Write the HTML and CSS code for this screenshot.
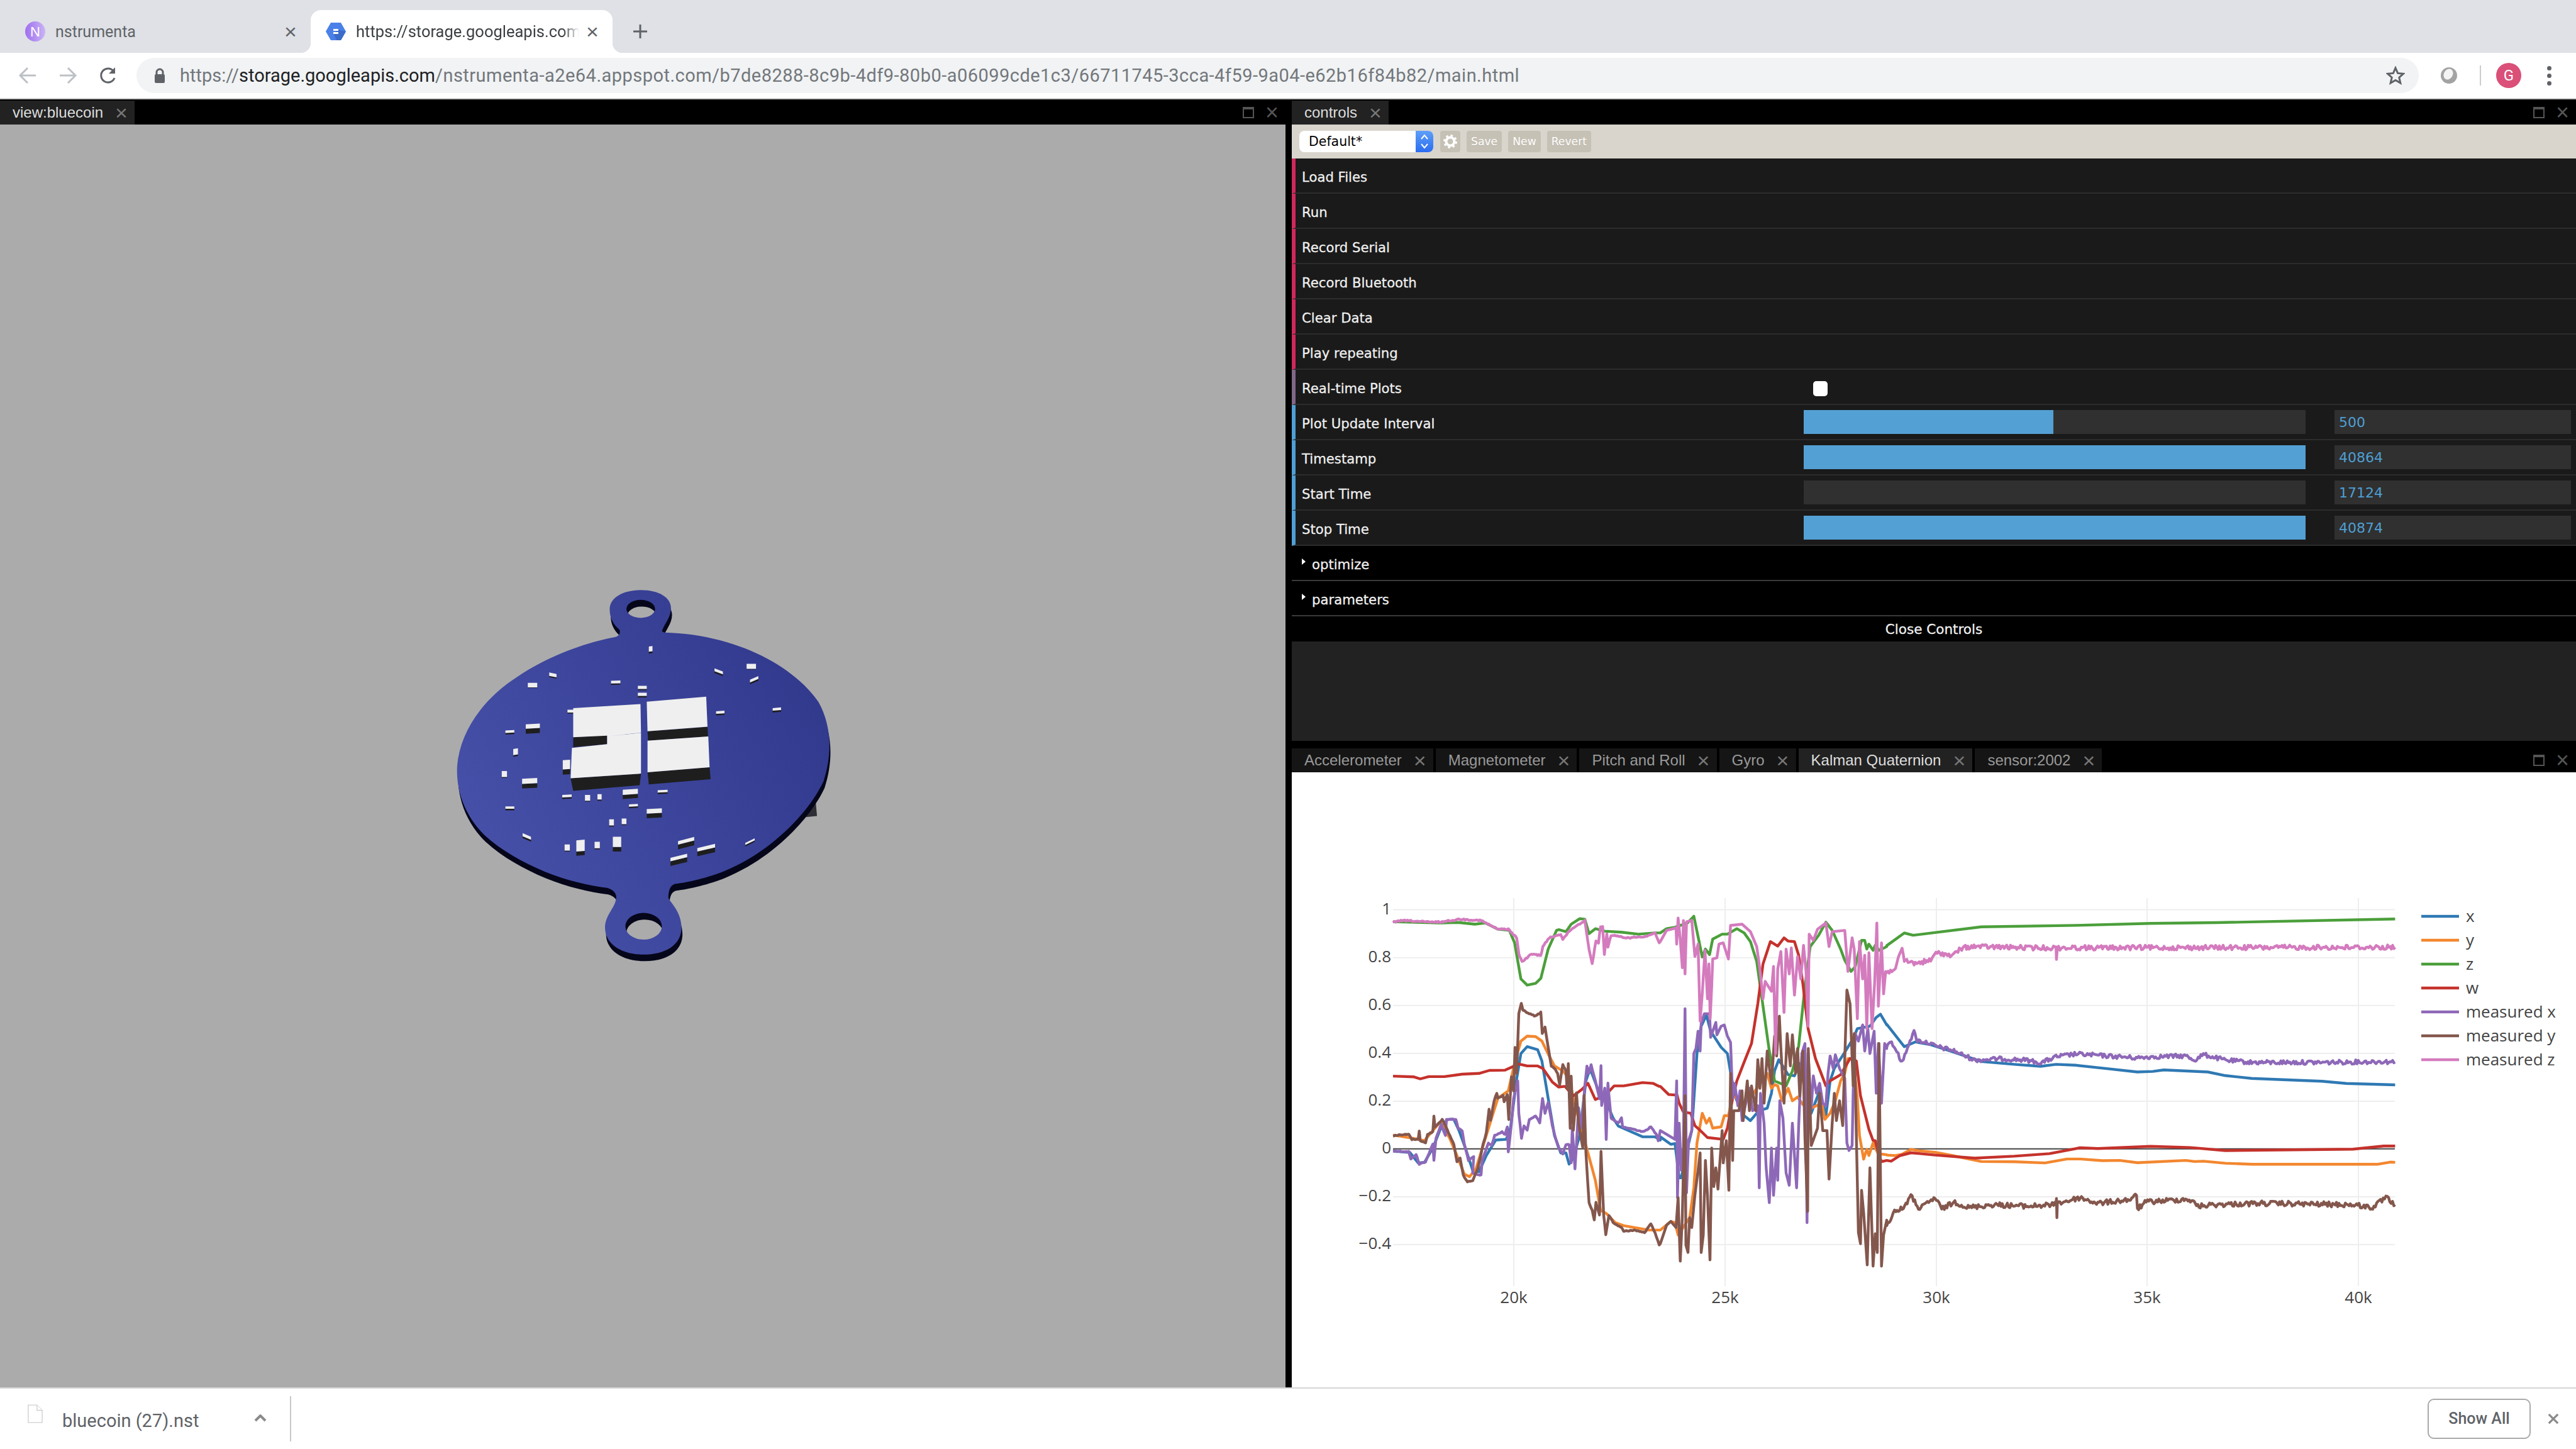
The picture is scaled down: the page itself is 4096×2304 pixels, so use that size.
FILE: index.html
```html
<!DOCTYPE html>
<html>

<head>
    <meta charset="UTF-8" />
    <title>nstrumenta</title>
    <link rel="stylesheet" href="styles.css">
</head>

<body>
    <div class="tabstrip">
        <div class="tab">
            <svg class="favicon" viewBox="0 0 32 32">
                <defs>
                    <linearGradient id="nst-grad" x1="0" y1="0" x2="1" y2="0">
                        <stop offset="0" stop-color="#a06ef0" />
                        <stop offset="1" stop-color="#c9b4f4" />
                    </linearGradient>
                </defs>
                <circle cx="16" cy="16" r="16" fill="url(#nst-grad)" />
                <text x="16" y="24" class="favicon-letter">N</text>
            </svg>
            <span class="tab-title">nstrumenta</span>
            <span class="tab-close">&times;</span>
        </div>
        <div class="tab tab-active">
            <svg class="favicon" viewBox="0 0 32 32">
                <path d="M8 2h16l8 14-8 14H8L0 16z" fill="#4a80e8" />
                <path d="M19 13l13 3-8 14h-7l-4-9z" fill="#3b6cc8" />
                <path d="M12 12h8v3h-8zM12 17h8v3h-8z" fill="#fff" />
            </svg>
            <span class="tab-title tab-title-fade">https://storage.googleapis.com</span>
            <span class="tab-close">&times;</span>
        </div>
        <svg class="new-tab" viewBox="0 0 24 24"><path d="M12 1v22M1 12h22" /></svg>
    </div>

    <div class="toolbar">
        <svg class="nav-icon nav-off" viewBox="0 0 32 32"><path d="M29 16H5M16 4L4 16l12 12" /></svg>
        <svg class="nav-icon nav-off" viewBox="0 0 32 32"><path d="M3 16h24M16 4l12 12-12 12" /></svg>
        <svg class="nav-icon" viewBox="0 0 32 32"><path d="M26 20a11 11 0 1 1-1-10" /><path class="nav-fill" d="M27 3v10H17z" /></svg>
        <div class="omnibox">
            <svg class="lock" viewBox="0 0 18 24"><path d="M4 10V7a5 5 0 0 1 10 0v3" class="lock-bow" /><rect x="1" y="10" width="16" height="14" rx="2" /></svg>
            <span class="url"><span class="url-dim">https://</span>storage.googleapis.com<span class="url-dim url-path">/nstrumenta-a2e64.appspot.com/b7de8288-8c9b-4df9-80b0-a06099cde1c3/66711745-3cca-4f59-9a04-e62b16f84b82/main.html</span></span>
            <svg class="star" viewBox="0 0 30 30"><path d="M15 3l3.6 8.4 9 .8-6.8 6 2 8.8L15 22.400 7.200 27l2-8.800-6.800-6 9-.8z" /></svg>
        </div>
        <div class="toolbar-end">
            <svg class="ext-icon" viewBox="0 0 28 28">
                <circle cx="14" cy="14" r="13" fill="#a3a3a3" />
                <ellipse cx="13" cy="12" rx="7" ry="9" fill="#f4f4f4" transform="rotate(30 13 12)" />
            </svg>
            <span class="toolbar-divider"></span>
            <span class="avatar">G</span>
            <span class="menu-dots"><i></i><i></i><i></i></span>
        </div>
    </div>

    <div class="workspace">
        <div class="panel panel-view">
            <div class="panel-head">
                <div class="ptab ptab-on">view:bluecoin<span class="ptab-x">&times;</span></div>
                <span class="panel-icons"><i class="icon-max"></i><span class="icon-x">&times;</span></span>
            </div>
            <div class="view-body">
                <svg id="board" class="fill-svg" viewBox="0 198 2044 2008"></svg>
            </div>
        </div>

        <div class="right-col">
            <div class="panel panel-controls">
                <div class="panel-head">
                    <div class="ptab ptab-on">controls<span class="ptab-x">&times;</span></div>
                    <span class="panel-icons"><i class="icon-max"></i><span class="icon-x">&times;</span></span>
                </div>
                <div class="preset-bar">
                    <div class="preset-select">
                        <span>Default*</span>
                        <span class="preset-arrows">
                            <svg viewBox="0 0 16 26"><path d="M3 9l5-6 5 6M3 17l5 6 5-6" /></svg>
                        </span>
                    </div>
                    <div class="preset-btn preset-gear">
                        <svg viewBox="0 0 24 24">
                            <circle cx="12" cy="12" r="6.500" class="gear-ring" />
                            <circle cx="12" cy="12" r="9.500" class="gear-teeth" />
                        </svg>
                    </div>
                    <div class="preset-btn">Save</div>
                    <div class="preset-btn">New</div>
                    <div class="preset-btn">Revert</div>
                </div>
                <div class="row row-fn">Load Files</div>
                <div class="row row-fn">Run</div>
                <div class="row row-fn">Record Serial</div>
                <div class="row row-fn">Record Bluetooth</div>
                <div class="row row-fn">Clear Data</div>
                <div class="row row-fn">Play repeating</div>
                <div class="row row-bool"><span class="row-label">Real-time Plots</span><span class="checkbox"></span></div>
                <div class="row row-num">
                    <span class="row-label">Plot Update Interval</span>
                    <span class="slider"><span class="slider-fill" style="width: 49.800%"></span></span>
                    <span class="num-box">500</span>
                </div>
                <div class="row row-num">
                    <span class="row-label">Timestamp</span>
                    <span class="slider"><span class="slider-fill" style="width: 100%"></span></span>
                    <span class="num-box">40864</span>
                </div>
                <div class="row row-num">
                    <span class="row-label">Start Time</span>
                    <span class="slider"><span class="slider-fill" style="width: 0%"></span></span>
                    <span class="num-box">17124</span>
                </div>
                <div class="row row-num">
                    <span class="row-label">Stop Time</span>
                    <span class="slider"><span class="slider-fill" style="width: 100%"></span></span>
                    <span class="num-box">40874</span>
                </div>
                <div class="folder"><i class="caret"></i>optimize</div>
                <div class="folder"><i class="caret"></i>parameters</div>
                <div class="close-controls">Close Controls</div>
                <div class="controls-rest"></div>
            </div>

            <div class="panel panel-plots">
                <div class="panel-head">
                    <div class="ptab">Accelerometer<span class="ptab-x">&times;</span></div>
                    <div class="ptab">Magnetometer<span class="ptab-x">&times;</span></div>
                    <div class="ptab">Pitch and Roll<span class="ptab-x">&times;</span></div>
                    <div class="ptab">Gyro<span class="ptab-x">&times;</span></div>
                    <div class="ptab ptab-on">Kalman Quaternion<span class="ptab-x">&times;</span></div>
                    <div class="ptab">sensor:2002<span class="ptab-x">&times;</span></div>
                    <span class="panel-icons"><i class="icon-max"></i><span class="icon-x">&times;</span></span>
                </div>
                <div class="plot-body">
                    <svg id="plot" class="fill-svg" viewBox="2054 1228 2042 978"></svg>
                </div>
            </div>
        </div>
    </div>

    <div class="downloads">
        <svg class="file-icon" viewBox="0 0 26 32"><path d="M1 1h15l9 9v21H1z" /><path d="M16 1v9h9" /></svg>
        <span class="file-name">bluecoin (27).nst</span>
        <svg class="file-chevron" viewBox="0 0 20 12"><path d="M2 10l8-8 8 8" /></svg>
        <span class="file-divider"></span>
        <span class="show-all">Show All</span>
        <svg class="bar-close" viewBox="0 0 20 20"><path d="M2 2l16 16M18 2L2 18" /></svg>
    </div>

    <script src="plots.js"></script>
</body>

</html>
```

FILE: styles.css
```css
* {
    box-sizing: border-box;
}

html,
body {
    margin: 0;
    width: 4096px;
    height: 2304px;
    overflow: hidden;
}

body {
    display: flex;
    flex-direction: column;
    font-family: "Liberation Sans", sans-serif;
    background-color: #000000;
}

/* browser tabs */
.tabstrip {
    display: flex;
    align-items: flex-end;
    height: 84px;
    background-color: #dfe1e6;
}

.tab {
    display: flex;
    align-items: center;
    width: 494px;
    height: 68px;
    padding-left: 40px;
    position: relative;
}

.tab-active {
    width: 480px;
    padding-left: 24px;
    background-color: #ffffff;
    border-radius: 16px 16px 0 0;
}

.tab-active::before,
.tab-active::after {
    content: "";
    position: absolute;
    bottom: 0;
    width: 16px;
    height: 16px;
}

.tab-active::before {
    left: -16px;
    background: radial-gradient(circle at 0 0, transparent 16px, #ffffff 16.500px);
}

.tab-active::after {
    right: -16px;
    background: radial-gradient(circle at 100% 0, transparent 16px, #ffffff 16.500px);
}

.favicon {
    width: 32px;
    height: 32px;
    flex: none;
}

.favicon-letter {
    font-family: "Liberation Sans", sans-serif;
    font-size: 22px;
    fill: #ffffff;
    text-anchor: middle;
}

.tab-title {
    flex: 1;
    margin-left: 16px;
    font-family: Roboto, sans-serif;
    font-size: 25px;
    color: #5f6368;
    white-space: nowrap;
    overflow: hidden;
}

.tab-title-fade {
    font-size: 25.500px;
    color: #3c4043;
    -webkit-mask-image: linear-gradient(to right, #000000 90%, transparent 97%);
}

.tab-close {
    width: 20px;
    margin-right: 22px;
    font-size: 34px;
    line-height: 34px;
    color: #5f6368;
    text-align: center;
}

.new-tab {
    width: 24px;
    height: 24px;
    margin: 0 0 22px 32px;
    fill: none;
    stroke: #5f6368;
    stroke-width: 3;
}

/* address bar */
.toolbar {
    display: flex;
    align-items: center;
    height: 74px;
    padding-left: 28px;
    background-color: #ffffff;
    border-bottom: 2px solid #c8c8c8;
}

.nav-icon {
    width: 32px;
    height: 32px;
    margin-right: 32px;
    fill: none;
    stroke: #5f6368;
    stroke-width: 3;
}

.nav-off {
    stroke: #bdc1c6;
}

.nav-fill {
    fill: #5f6368;
    stroke: none;
}

.omnibox {
    display: flex;
    align-items: center;
    flex: 1;
    height: 56px;
    margin-left: -3px;
    padding: 0 22px 0 28px;
    background-color: #f1f3f4;
    border-radius: 28px;
}

.lock {
    width: 18px;
    height: 24px;
    fill: #5f6368;
}

.lock-bow {
    fill: none;
    stroke: #5f6368;
    stroke-width: 3;
}

.url {
    flex: 1;
    margin-left: 23px;
    font-family: Roboto, sans-serif;
    font-size: 29px;
    color: #202124;
    white-space: nowrap;
}

.url-dim {
    color: #73777c;
}

.url-path {
    letter-spacing: 0.470px;
}

.star {
    width: 30px;
    height: 30px;
    fill: none;
    stroke: #5f6368;
    stroke-width: 3;
}

.toolbar-end {
    display: flex;
    align-items: center;
    width: 250px;
}

.ext-icon {
    width: 28px;
    height: 28px;
    margin-left: 34px;
}

.toolbar-divider {
    width: 2px;
    height: 32px;
    margin-left: 35px;
    background-color: #cccccc;
}

.avatar {
    width: 40px;
    height: 40px;
    margin-left: 24px;
    font-family: Roboto, sans-serif;
    font-size: 24px;
    line-height: 40px;
    text-align: center;
    color: #ffffff;
    background-color: #da5078;
    border-radius: 50%;
}

.menu-dots {
    display: flex;
    flex-direction: column;
    gap: 5px;
    margin-left: 41px;
}

.menu-dots i {
    width: 7px;
    height: 7px;
    background-color: #5f6368;
    border-radius: 50%;
}

/* layout panels */
.workspace {
    display: flex;
    gap: 10px;
    height: 2048px;
}

.panel {
    display: flex;
    flex-direction: column;
}

.panel-view {
    width: 2044px;
}

.right-col {
    display: flex;
    flex-direction: column;
    gap: 10px;
    flex: 1;
}

.panel-controls {
    height: 1020px;
}

.panel-plots {
    flex: 1;
}

.panel-head {
    display: flex;
    align-items: flex-end;
    gap: 4px;
    height: 40px;
    flex: none;
    background-color: #000000;
}

.ptab {
    display: flex;
    align-items: center;
    height: 38px;
    padding: 0 15px 0 20px;
    font-size: 24px;
    color: #999999;
    background-color: #151515;
    white-space: nowrap;
}

.ptab-on {
    color: #dddddd;
    background-color: #222222;
}

.ptab-x {
    width: 16px;
    margin-left: 19px;
    font-size: 34px;
    line-height: 34px;
    color: #777777;
    text-align: center;
}

.panel-icons {
    display: flex;
    align-items: center;
    margin-left: auto;
    height: 38px;
    padding-right: 14px;
}

.icon-max {
    width: 18px;
    height: 18px;
    border: 2px solid #555555;
    border-top-width: 4px;
}

.icon-x {
    width: 18px;
    margin-left: 18px;
    font-size: 36px;
    line-height: 36px;
    text-align: center;
    color: #555555;
}

.view-body {
    flex: 1;
    background-color: #ababab;
}

.fill-svg {
    display: block;
    width: 100%;
    height: 100%;
}

/* controls */
.preset-bar {
    display: flex;
    align-items: center;
    gap: 10px;
    height: 54px;
    flex: none;
    padding-left: 12px;
    background-color: #d9d5cc;
}

.preset-select {
    display: flex;
    align-items: center;
    justify-content: space-between;
    width: 213px;
    height: 34px;
    margin-right: 1px;
    padding-left: 15px;
    font-family: "DejaVu Sans", sans-serif;
    font-size: 20.500px;
    color: #000000;
    background-color: #ffffff;
    border-radius: 8px;
    overflow: hidden;
}

.preset-arrows {
    display: flex;
    align-items: center;
    justify-content: center;
    width: 28px;
    height: 34px;
    background: linear-gradient(#5f9ff8, #2a6cf0);
}

.preset-arrows svg {
    width: 16px;
    height: 26px;
    fill: none;
    stroke: #ffffff;
    stroke-width: 2;
}

.preset-btn {
    display: flex;
    align-items: center;
    height: 34px;
    padding: 0 7px;
    font-family: "DejaVu Sans", sans-serif;
    font-size: 17.200px;
    color: #ffffff;
    background-color: #c6c1b5;
    border-radius: 4px;
    text-shadow: 0 1px 0 #b2ac9f;
}

.preset-gear {
    width: 32px;
    padding: 0 4px;
}

.preset-gear svg {
    width: 24px;
    height: 24px;
    fill: none;
    stroke: #ffffff;
}

.gear-ring {
    stroke-width: 4;
}

.gear-teeth {
    stroke-width: 3;
    stroke-dasharray: 3.500 4;
}

.row {
    display: flex;
    align-items: center;
    height: 56px;
    flex: none;
    padding: 4px 0 0 10px;
    font-family: "DejaVu Sans", sans-serif;
    font-size: 21.200px;
    color: #f0f0f0;
    background-color: #1a1a1a;
    border-left: 6px solid #d1285c;
    border-bottom: 2px solid #2c2c2c;
    text-shadow: 0 -1px 0 #111111;
    -webkit-text-stroke: 0.300px #f0f0f0;
}

.row-bool {
    border-left-color: #806787;
}

.row-num {
    border-left-color: #4f9fd3;
}

.row-label {
    width: 798px;
    flex: none;
}

.checkbox {
    width: 23px;
    height: 24px;
    margin: 1px 0 0 15px;
    background-color: #ffffff;
    border-radius: 5px;
}

.slider {
    width: 798px;
    height: 38px;
    flex: none;
    margin-top: -4px;
    background-color: #303030;
}

.slider-fill {
    display: block;
    height: 100%;
    background-color: #53a0d4;
}

.num-box {
    width: 376px;
    height: 38px;
    margin: -4px 0 0 46px;
    padding-left: 7px;
    font-size: 22px;
    line-height: 40px;
    color: #4f9fd3;
    background-color: #303030;
    text-shadow: none;
    -webkit-text-stroke: 0;
}

.folder {
    display: flex;
    align-items: center;
    height: 56px;
    flex: none;
    padding: 4px 0 0 16px;
    font-family: "DejaVu Sans", sans-serif;
    font-size: 21.200px;
    color: #f0f0f0;
    background-color: #000000;
    border-bottom: 2px solid #3a3a3a;
    -webkit-text-stroke: 0.300px #f0f0f0;
}

.caret {
    width: 0;
    height: 0;
    margin: -8px 10px 0 0;
    border-left: 6px solid #ffffff;
    border-top: 5px solid transparent;
    border-bottom: 5px solid transparent;
}

.close-controls {
    height: 40px;
    flex: none;
    font-family: "DejaVu Sans", sans-serif;
    font-size: 21.500px;
    line-height: 42px;
    text-align: center;
    color: #f0f0f0;
    background-color: #000000;
    -webkit-text-stroke: 0.300px #f0f0f0;
}

.controls-rest {
    flex: 1;
    background-color: #222222;
}

.plot-body {
    flex: 1;
    background-color: #ffffff;
}

/* plot */
.grid-line {
    stroke: #eeeeee;
    stroke-width: 2;
}

.zero-line {
    stroke: #444444;
    stroke-width: 2;
}

.plot-text {
    font-family: "Open Sans", sans-serif;
    font-size: 26px;
    fill: #444444;
}

.tick-y {
    text-anchor: end;
}

.tick-x {
    text-anchor: middle;
}

.trace {
    fill: none;
    stroke-width: 4.400;
    stroke-linejoin: round;
}

/* bottom bar */
.downloads {
    display: flex;
    align-items: center;
    flex: 1;
    padding-left: 44px;
    background-color: #ffffff;
    border-top: 2px solid #d5d5d5;
}

.file-icon {
    width: 24px;
    height: 30px;
    margin-top: -16px;
    fill: #ffffff;
    stroke: #d0d0d0;
    stroke-width: 1.500;
}

.file-name {
    margin: 6px 0 0 31px;
    font-family: Roboto, sans-serif;
    font-size: 29px;
    color: #5f6368;
}

.file-chevron {
    width: 20px;
    height: 12px;
    margin: -2px 0 0 88px;
    fill: none;
    stroke: #8a8a8a;
    stroke-width: 4;
}

.file-divider {
    width: 2px;
    height: 72px;
    margin-left: 37px;
    background-color: #c8c8c8;
}

.show-all {
    width: 164px;
    height: 64px;
    margin-left: auto;
    font-family: Roboto, sans-serif;
    font-size: 25px;
    font-weight: 500;
    line-height: 60px;
    text-align: center;
    color: #5f6368;
    border: 2px solid #aaaaaa;
    border-radius: 10px;
}

.bar-close {
    width: 18px;
    height: 18px;
    margin: 0 27px 0 27px;
    fill: none;
    stroke: #8a8a8a;
    stroke-width: 3.500;
}
```

FILE: plots.js
```js
const SVG_NS = "http://www.w3.org/2000/svg";

function add(parent, tag, attrs, text) {
    const el = document.createElementNS(SVG_NS, tag);
    for (const key in attrs) {
        el.setAttribute(key, attrs[key]);
    }
    if (text) {
        el.textContent = text;
    }
    parent.appendChild(el);
    return el;
}

// small seeded generator so the noisy traces stay the same on each load
let seed = 12345;
function rand() {
    seed = (seed * 1103515245 + 12345) % 2147483648;
    return seed / 2147483648;
}

/* ---------- board view ---------- */

const BOARD_OUTLINE = "M850 205L860 210C1100 215 1340 320 1450 480C1500 570 1505 680 1470 790C1420 900 1280 1060 1090 1140" +
    "C1030 1165 950 1185 900 1190C880 1195 875 1220 875 1245C885 1265 925 1300 925 1360C925 1430 860 1465 780 1465" +
    "C690 1465 632 1420 632 1360C632 1310 675 1280 675 1240C675 1225 660 1210 640 1205C500 1190 300 1120 170 1000" +
    "C90 920 60 820 65 730C75 600 160 470 300 380C400 310 550 250 670 228C690 222 690 210 688 200" +
    "C660 175 650 150 650 120C650 75 700 45 770 45C840 45 885 75 885 115C885 150 860 175 850 205Z" +
    "M714 118a55 35 0 1 0 110 0a55 35 0 1 0-110 0Z" +
    "M710 1355a70 52 0 1 0 140 0a70 52 0 1 0-140 0Z";

// x, y, width, height, side height, tilt
const CHIPS = [
    [800, 265, 14, 20, 7, -2], [655, 398, 36, 11, 5, -1], [758, 418, 34, 12, 5, 0], [758, 445, 34, 12, 6, 0],
    [1052, 350, 32, 11, 7, 12], [1175, 332, 36, 20, 2, 0], [1188, 394, 32, 11, 7, -14], [1058, 517, 32, 10, 6, -2],
    [1275, 505, 32, 10, 7, -3], [418, 366, 28, 13, 5, 6], [336, 406, 36, 18, 2, 0], [488, 511, 24, 11, 4, 0],
    [328, 568, 54, 17, 20, -3], [250, 592, 34, 10, 6, -2], [280, 664, 18, 24, 6, -3], [470, 708, 28, 36, 20, -2],
    [236, 750, 20, 23, 4, 0], [314, 780, 58, 20, 18, -3], [468, 843, 36, 10, 6, -2], [555, 843, 20, 23, 3, 0],
    [603, 840, 16, 21, 5, 0], [700, 823, 58, 20, 16, -4], [834, 825, 38, 9, 6, -2], [724, 880, 34, 9, 6, -2],
    [792, 898, 58, 18, 18, -3], [250, 888, 34, 9, 6, 0], [648, 938, 18, 24, 4, 0], [696, 935, 18, 22, 4, 0],
    [316, 992, 32, 12, 7, 14], [477, 1036, 20, 24, 4, 0], [522, 1020, 32, 44, 16, -3], [592, 1026, 20, 25, 4, 0],
    [662, 1006, 32, 40, 18, 0], [912, 1023, 62, 14, 18, -16], [986, 1050, 68, 14, 18, -16], [883, 1088, 64, 14, 18, -16],
    [1170, 1030, 36, 8, 6, -18]
];

// four big modules, drawn as top and side polygons
const BIG_SIDES = "M510 618L640 610V645L510 657ZM500 778L770 760L765 805L510 827ZM795 595L1025 578L1027 615L797 632ZM795 755L1033 735L1037 782L800 802Z";
const BIG_TOPS = "M510 505L768 489L770 600L640 615L640 612L510 618ZM640 615L770 601L770 760L500 778L505 660L640 645ZM792 480L1020 460L1025 577L795 595ZM795 632L1028 615L1033 735L795 755Z";

function drawBoard() {
    const svg = document.querySelector("#board");
    const defs = add(svg, "defs", {});
    const grad = add(defs, "linearGradient", { id: "pcb", gradientUnits: "userSpaceOnUse", x1: 100, y1: 1100, x2: 1400, y2: 400 });
    add(grad, "stop", { offset: 0, "stop-color": "#4751a9" });
    add(grad, "stop", { offset: 1, "stop-color": "#323a8e" });

    const g = add(svg, "g", { transform: "translate(700 920) scale(.4146 .408)" });
    add(g, "path", { d: "M1440 870L1445 925L1395 930Z", fill: "#2e2e34" });
    add(g, "path", { d: BOARD_OUTLINE, fill: "#05061a", "fill-rule": "evenodd", transform: "translate(4 26)" });
    add(g, "path", { d: BOARD_OUTLINE, fill: "url(#pcb)", "fill-rule": "evenodd" });

    let sides = BIG_SIDES;
    let tops = BIG_TOPS;
    CHIPS.forEach(function (c) {
        const [x, y, w, h, s, t] = c;
        sides += `M${x} ${y + h}l${w} ${t}v${s}l${-w} ${-t}Z`;
        tops += `M${x} ${y}l${w} ${t}v${h}l${-w} ${-t}Z`;
    });
    add(g, "path", { d: sides, fill: "#1e1e1e" });
    add(g, "path", { d: tops, fill: "#efefef" });
}

/* ---------- plot ---------- */

const GRID_Y = [[1446.6, "1"], [1522.7, "0.8"], [1598.8, "0.6"], [1674.9, "0.4"], [1751, "0.2"], [1903, "\u22120.2"], [1979, "\u22120.4"]];
const GRID_X = [[2407, "20k"], [2743, "25k"], [3079, "30k"], [3414, "35k"], [3750, "40k"]];
const PLOT_LEFT = 2215;
const PLOT_RIGHT = 3808;

// points are [x, y, x, y, ...] in three overlapping pieces of the time axis
const TRACES = [
    {
        name: "x", color: "#2f79b3",
        a: [0, 1012, 80, 1018, 120, 1060, 150, 1058, 190, 1000, 230, 915, 260, 885, 290, 885, 315, 930, 345, 1000, 380, 1090, 410, 1095, 445, 1030, 490, 968, 540, 965, 560, 920, 590, 720, 610, 620, 640, 592, 690, 605, 710, 650, 740, 800, 770, 950, 800, 1020, 825, 1020, 840, 1065, 860, 1040, 890, 950, 920, 730, 940, 680, 980, 770, 1020, 820, 1050, 880, 1075, 912, 1190, 955, 1250, 955, 1275, 968],
        b: [0, 955, 50, 985, 70, 982, 90, 1120, 100, 1120, 130, 1000, 150, 930, 175, 620, 195, 510, 220, 465, 240, 530, 290, 595, 320, 620, 340, 720, 360, 800, 400, 870, 430, 890, 470, 850, 510, 840, 530, 780, 545, 690, 565, 645, 610, 705, 640, 710, 665, 660, 700, 790, 720, 860, 760, 770, 790, 870, 810, 730, 830, 680, 880, 615, 920, 560, 940, 520, 1000, 510, 1030, 475, 1050, 462, 1080, 505],
        c: [0, 512, 40, 592, 65, 575, 100, 585, 150, 610, 215, 645, 290, 655, 350, 662, 385, 655, 430, 658, 500, 670, 570, 682, 605, 680, 630, 675, 730, 682, 770, 695, 830, 705, 990, 715, 1045, 723, 1156, 728]
    },
    {
        name: "y", color: "#f3872f",
        a: [0, 948, 90, 960, 150, 970, 190, 930, 225, 895, 270, 960, 300, 1020, 340, 1105, 365, 1115, 395, 1085, 430, 990, 470, 880, 500, 800, 550, 770, 580, 660, 610, 570, 640, 550, 680, 552, 710, 570, 745, 630, 770, 670, 810, 690, 840, 720, 860, 800, 900, 930, 930, 1020, 965, 1130, 990, 1250, 1020, 1265, 1060, 1300, 1100, 1312, 1220, 1330, 1270, 1330],
        b: [0, 1330, 50, 1295, 70, 1300, 85, 1350, 140, 1280, 160, 1160, 175, 980, 200, 860, 220, 900, 235, 880, 250, 920, 290, 915, 305, 870, 325, 870, 345, 790, 400, 820, 430, 800, 460, 760, 510, 700, 530, 760, 545, 745, 560, 750, 580, 810, 610, 760, 630, 810, 655, 795, 680, 825, 720, 840, 770, 820, 785, 885, 810, 860, 835, 810, 860, 730, 880, 700, 895, 640, 920, 640, 940, 800, 950, 950, 970, 1045, 985, 1005, 995, 1030, 1015, 980, 1040, 1025, 1060, 1025, 1080, 1027],
        c: [0, 978, 20, 980, 35, 975, 55, 958, 75, 963, 110, 968, 150, 980, 215, 1001, 290, 1002, 360, 1006, 410, 992, 440, 992, 490, 998, 530, 997, 570, 1005, 680, 997, 700, 1001, 720, 1000, 770, 1007, 830, 1011, 1115, 1011, 1145, 1003, 1156, 1004]
    },
    {
        name: "z", color: "#4b9f3b",
        a: [0, 90, 230, 95, 310, 93, 390, 100, 440, 95, 500, 120, 555, 125, 580, 175, 610, 320, 640, 345, 680, 338, 705, 318, 740, 200, 780, 125, 790, 122, 825, 130, 850, 100, 890, 78, 915, 80, 935, 138, 965, 118, 1010, 128, 1090, 132, 1170, 140, 1250, 135, 1275, 135],
        b: [0, 135, 30, 118, 70, 112, 130, 95, 160, 68, 185, 170, 200, 232, 215, 200, 235, 222, 250, 160, 295, 140, 320, 140, 365, 118, 400, 135, 430, 170, 460, 250, 480, 370, 520, 610, 545, 730, 600, 750, 630, 690, 660, 590, 690, 350, 715, 190, 755, 145, 790, 92, 820, 125, 860, 200, 880, 245, 910, 290, 930, 270, 960, 165, 975, 165, 985, 200, 995, 180, 1015, 205, 1025, 185, 1045, 205, 1080, 190],
        c: [0, 232, 40, 187, 60, 195, 215, 165, 430, 160, 600, 153, 750, 150, 1156, 137]
    },
    {
        name: "w", color: "#c5322c",
        a: [0, 711, 100, 714, 130, 722, 170, 713, 245, 713, 330, 703, 410, 700, 460, 688, 535, 687, 600, 662, 640, 670, 690, 670, 715, 680, 760, 735, 790, 755, 820, 752, 860, 790, 900, 765, 930, 740, 965, 805, 1010, 790, 1055, 750, 1100, 750, 1190, 737, 1240, 740, 1270, 752],
        b: [0, 752, 40, 785, 80, 787, 90, 820, 110, 855, 145, 860, 165, 910, 185, 925, 225, 958, 300, 965, 320, 920, 345, 800, 365, 730, 395, 665, 435, 580, 465, 420, 490, 260, 525, 170, 560, 188, 590, 155, 610, 168, 640, 170, 660, 225, 680, 340, 705, 520, 740, 640, 790, 750, 810, 730, 860, 705, 905, 640, 935, 650, 955, 790, 995, 925, 1015, 970, 1025, 970, 1040, 1020, 1055, 1055, 1080, 1050],
        c: [0, 997, 10, 1000, 30, 980, 55, 970, 110, 978, 200, 989, 290, 982, 370, 973, 440, 952, 480, 955, 600, 947, 690, 951, 770, 962, 1060, 957, 1130, 946, 1156, 946]
    },
    {
        name: "measured x", color: "#8e68b8", jitterA: 1.5, jitterC: 15,
        a: [0, 1012, 75, 1015, 85, 1045, 110, 1025, 125, 1065, 155, 1055, 190, 985, 195, 1050, 205, 960, 230, 905, 250, 950, 255, 885, 300, 885, 310, 920, 330, 930, 340, 985, 360, 1050, 385, 1035, 380, 1100, 420, 1110, 425, 1050, 455, 980, 470, 990, 485, 950, 520, 935, 535, 945, 545, 915, 550, 1015, 565, 900, 575, 800, 595, 730, 600, 860, 613, 960, 625, 910, 640, 930, 650, 885, 680, 870, 700, 900, 713, 800, 725, 860, 740, 815, 760, 910, 775, 960, 790, 1000, 810, 1025, 825, 985, 840, 985, 850, 1060, 855, 920, 868, 1085, 885, 840, 900, 920, 915, 750, 925, 670, 935, 700, 945, 665, 965, 730, 985, 800, 992, 670, 995, 830, 1010, 760, 1017, 965, 1025, 740, 1040, 880, 1075, 900, 1090, 880, 1095, 915, 1150, 925, 1195, 935, 1230, 915, 1260, 950, 1265, 970, 1275, 930],
        b: [0, 930, 30, 945, 70, 965, 78, 730, 82, 1200, 90, 900, 100, 1090, 110, 1000, 118, 440, 125, 1180, 135, 970, 150, 930, 160, 620, 170, 600, 180, 530, 190, 610, 195, 500, 210, 460, 235, 460, 240, 555, 265, 495, 270, 545, 290, 510, 305, 505, 320, 550, 335, 575, 345, 800, 355, 740, 370, 830, 380, 770, 390, 890, 410, 810, 425, 760, 440, 850, 465, 830, 472, 1160, 478, 780, 495, 900, 505, 1080, 520, 1220, 530, 1000, 540, 1190, 555, 1000, 560, 1130, 570, 810, 585, 880, 600, 1100, 615, 1150, 630, 900, 650, 1160, 660, 910, 675, 620, 690, 580, 700, 1300, 705, 620, 720, 840, 730, 710, 745, 780, 760, 740, 775, 820, 790, 830, 800, 700, 810, 630, 825, 680, 835, 625, 855, 680, 880, 720, 890, 980, 900, 1010, 915, 990, 920, 770, 930, 540, 945, 570, 965, 505, 975, 610, 990, 520, 1000, 620, 1020, 530, 1030, 780, 1040, 580, 1055, 820, 1070, 580, 1080, 600],
        c: [0, 590, 8, 570, 20, 600, 35, 650, 50, 580, 62, 540, 70, 570, 95, 578, 110, 590, 150, 605, 200, 640, 260, 635, 320, 640, 350, 650, 385, 628, 430, 618, 500, 625, 570, 632, 600, 628, 680, 625, 700, 640, 720, 620, 770, 640, 830, 648, 1000, 648, 1130, 645, 1156, 647]
    },
    {
        name: "measured y", color: "#84574d", jitterA: 1.5, jitterC: 18,
        a: [0, 950, 75, 945, 90, 965, 120, 965, 125, 930, 130, 970, 155, 980, 165, 945, 190, 935, 195, 870, 200, 915, 235, 885, 260, 930, 290, 985, 305, 1055, 320, 1040, 335, 1110, 355, 1135, 380, 1130, 405, 1080, 430, 985, 445, 940, 458, 845, 465, 890, 482, 810, 495, 780, 500, 800, 525, 790, 530, 815, 545, 785, 552, 885, 565, 715, 575, 770, 582, 595, 590, 700, 600, 460, 612, 418, 620, 445, 650, 460, 680, 470, 705, 455, 712, 540, 725, 515, 745, 620, 755, 670, 770, 680, 785, 700, 795, 745, 810, 665, 825, 690, 830, 760, 836, 660, 845, 920, 850, 710, 860, 930, 875, 780, 885, 900, 905, 1000, 912, 790, 920, 1020, 935, 1220, 950, 1250, 960, 1290, 968, 1220, 985, 1270, 992, 1015, 1005, 1270, 1015, 1350, 1030, 1270, 1050, 1300, 1090, 1320, 1100, 1335, 1150, 1330, 1200, 1340, 1230, 1305, 1250, 1340, 1270, 1390],
        b: [0, 1385, 30, 1310, 50, 1295, 75, 1320, 85, 1200, 95, 1455, 105, 1280, 118, 790, 122, 1390, 132, 1420, 140, 1280, 150, 1320, 165, 1190, 180, 1090, 190, 1020, 195, 1420, 205, 1350, 215, 1050, 225, 1190, 237, 1450, 245, 1000, 255, 1155, 265, 1080, 275, 1165, 295, 930, 300, 1060, 315, 970, 327, 1170, 335, 700, 345, 1050, 350, 850, 375, 850, 390, 770, 395, 890, 415, 730, 425, 850, 435, 750, 455, 850, 465, 645, 475, 760, 485, 640, 495, 820, 510, 610, 530, 740, 545, 550, 555, 630, 568, 470, 575, 600, 590, 820, 605, 540, 620, 670, 630, 545, 645, 700, 655, 600, 665, 790, 680, 610, 690, 960, 703, 1255, 706, 600, 720, 990, 750, 920, 760, 780, 775, 930, 795, 930, 805, 1125, 820, 900, 830, 780, 840, 890, 855, 810, 870, 910, 890, 365, 905, 420, 920, 750, 925, 540, 935, 950, 945, 1340, 955, 1385, 960, 1170, 970, 1260, 987, 1470, 1000, 1080, 1015, 1475, 1025, 1345, 1035, 1420, 1043, 580, 1055, 1475, 1065, 1350, 1080, 1290],
        c: [0, 1235, 15, 1180, 35, 1170, 55, 1125, 75, 1170, 110, 1130, 125, 1170, 155, 1145, 185, 1165, 240, 1155, 320, 1160, 385, 1155, 386, 1125, 387, 1195, 388, 1150, 440, 1130, 480, 1150, 560, 1135, 568, 1115, 570, 1170, 590, 1145, 685, 1135, 710, 1160, 740, 1155, 850, 1150, 1060, 1155, 1105, 1165, 1135, 1130, 1156, 1155]
    },
    {
        name: "measured z", color: "#d47bbe", jitterA: 2, jitterC: 17,
        a: [0, 92, 50, 85, 180, 92, 240, 90, 320, 80, 420, 85, 500, 120, 550, 120, 590, 155, 600, 220, 615, 250, 640, 235, 660, 220, 705, 225, 715, 190, 745, 155, 800, 140, 810, 160, 850, 120, 915, 85, 935, 200, 950, 260, 968, 165, 980, 175, 990, 110, 1000, 110, 1008, 220, 1020, 140, 1025, 190, 1040, 145, 1120, 155, 1210, 148, 1250, 135, 1270, 175],
        b: [0, 170, 30, 125, 75, 115, 78, 180, 85, 75, 95, 160, 105, 275, 110, 85, 118, 300, 125, 90, 150, 85, 165, 230, 180, 180, 190, 490, 200, 380, 213, 205, 225, 400, 232, 260, 238, 480, 245, 350, 250, 240, 270, 235, 280, 180, 300, 175, 325, 240, 335, 105, 390, 100, 430, 130, 460, 190, 475, 280, 490, 400, 500, 330, 530, 370, 540, 270, 550, 620, 560, 280, 575, 210, 590, 455, 600, 200, 615, 300, 625, 195, 640, 385, 655, 230, 670, 320, 683, 185, 695, 290, 705, 510, 710, 140, 730, 165, 750, 120, 790, 95, 805, 190, 820, 130, 880, 125, 895, 290, 915, 155, 925, 200, 940, 480, 950, 170, 965, 320, 975, 225, 985, 520, 995, 215, 1010, 520, 1022, 340, 1033, 95, 1040, 430, 1055, 175, 1065, 380, 1075, 290],
        c: [0, 330, 20, 310, 35, 245, 40, 285, 65, 295, 100, 285, 115, 255, 150, 270, 165, 245, 190, 235, 330, 240, 385, 240, 386, 275, 388, 240, 1156, 238]
    }
];

// maps one piece onto page coordinates, adding measurement noise when asked
function pieceToPoints(flat, toX, toY, jitter) {
    const points = [];
    for (let i = 0; i + 3 < flat.length; i += 2) {
        const x0 = toX(flat[i]), y0 = toY(flat[i + 1]);
        const x1 = toX(flat[i + 2]), y1 = toY(flat[i + 3]);
        const steps = jitter ? Math.max(1, Math.round((x1 - x0) / 2)) : 1;
        for (let s = 0; s < steps; s++) {
            const f = s / steps;
            const noise = jitter ? (rand() - 0.5) * jitter : 0;
            points.push([x0 + (x1 - x0) * f, y0 + (y1 - y0) * f + noise]);
        }
    }
    points.push([toX(flat[flat.length - 2]), toY(flat[flat.length - 1])]);
    return points;
}

function drawPlot() {
    const svg = document.querySelector("#plot");

    GRID_Y.forEach(function (g) {
        add(svg, "line", { class: "grid-line", x1: PLOT_LEFT, x2: PLOT_RIGHT, y1: g[0], y2: g[0] });
    });
    GRID_X.forEach(function (g) {
        add(svg, "line", { class: "grid-line", x1: g[0], x2: g[0], y1: 1428, y2: 2045 });
        add(svg, "text", { class: "plot-text tick-x", x: g[0], y: 2072 }, g[1]);
    });
    GRID_Y.concat([[1826.7, "0"]]).forEach(function (g) {
        add(svg, "text", { class: "plot-text tick-y", x: 2212, y: g[0] + 7 }, g[1]);
    });
    add(svg, "line", { class: "zero-line", x1: PLOT_LEFT, x2: PLOT_RIGHT, y1: 1826.7, y2: 1826.7 });

    TRACES.forEach(function (t, i) {
        const zoomY = function (v) { return 1430 + v / 2.529; };
        const a = pieceToPoints(t.a, function (v) { return 2215 + v / 3; }, zoomY, t.jitterA || 0);
        const b = pieceToPoints(t.b, function (v) { return 2640 + v / 3; }, zoomY, 0);
        const c = pieceToPoints(t.c, function (v) { return 3000 + v / 1.43; }, function (v) { return 1400 + v / 2.24; }, (t.jitterC || 0) / 2.24);
        const all = a.concat(b, c).map(function (p) { return p[0].toFixed(1) + "," + p[1].toFixed(1); });
        add(svg, "polyline", { class: "trace", stroke: t.color, points: all.join(" ") });

        const legendY = 1457 + i * 38;
        add(svg, "line", { class: "trace", stroke: t.color, x1: 3850, x2: 3910, y1: legendY, y2: legendY });
        add(svg, "text", { class: "plot-text", x: 3921, y: legendY + 9 }, t.name);
    });
}

drawBoard();
drawPlot();
```
